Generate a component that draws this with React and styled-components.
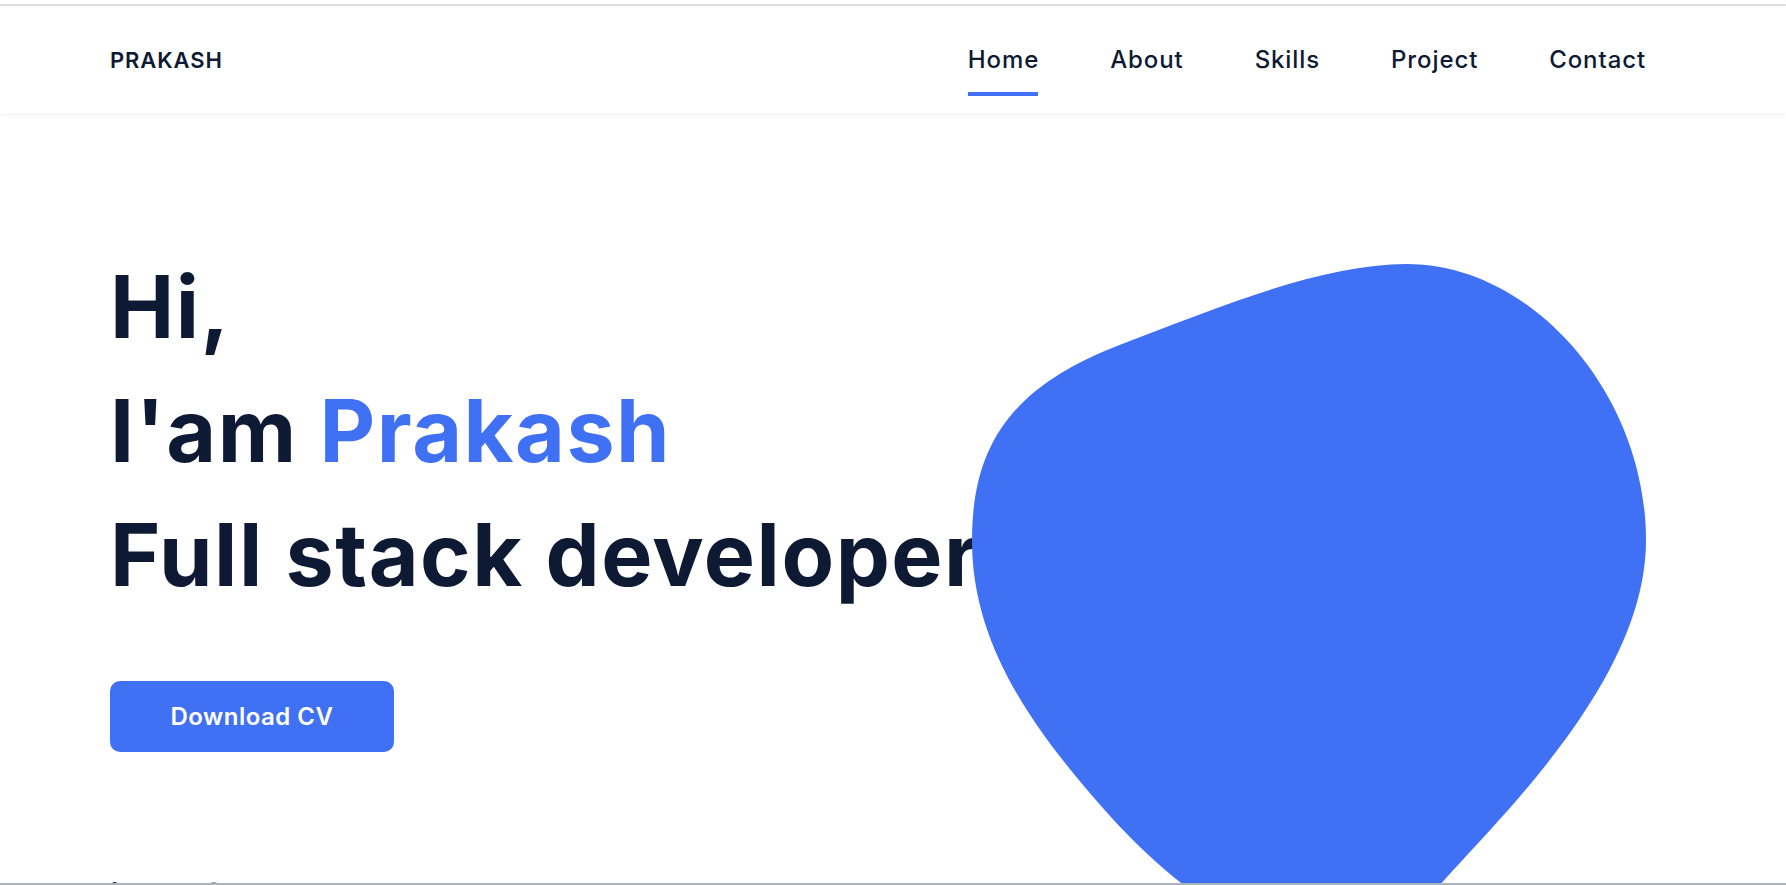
import React from "react";
import styled, { createGlobalStyle } from "styled-components";
import { FaLinkedinIn, FaGithub } from "react-icons/fa";

const GlobalStyle = createGlobalStyle`
  html, body {
    margin: 0;
    padding: 0;
    background: #ffffff;
    overflow: hidden;
  }
  * {
    box-sizing: border-box;
  }
`;

const links = ["Home", "About", "Skills", "Project", "Contact"];

const App = () => {
  return (
    <Page>
      <GlobalStyle />
      <TopRule />
      <Header>
        <Logo>PRAKASH</Logo>
        <NavMenu>
          {links.map((l) => (
            <NavLink key={l} href="#" $active={l === "Home"}>
              {l}
            </NavLink>
          ))}
        </NavMenu>
      </Header>
      <Hero>
        <Intro>
          <Title>
            Hi,
            <br />
            I'am <Accent>Prakash</Accent>
          </Title>
          <Subtitle>Full stack developer</Subtitle>
          <DownloadBtn href="#">Download CV</DownloadBtn>
          <Socials>
            <SocialLink href="#">
              <FaLinkedinIn />
            </SocialLink>
            <SocialLink href="#">
              <FaGithub />
            </SocialLink>
          </Socials>
        </Intro>
        <BlobBox>
          <svg width="674" height="700" viewBox="0 0 674 700">
            <path
              fill="#4070f4"
              d="M 0 277 C 0 180, 40 122, 150 80 C 250 42, 350 0, 435 0 C 560 0, 674 130, 674 276 C 674 420, 520 560, 460 630 C 420 662, 380 672, 330 672 C 270 672, 200 620, 138 552 C 60 465, 0 380, 0 277 Z"
            />
          </svg>
        </BlobBox>
      </Hero>
      <BottomEdge />
    </Page>
  );
};

const Page = styled.div`
  height: 100vh;
  overflow: hidden;
  font-family: Inter, "Liberation Sans", sans-serif;
  color: #0e1a34;
`;

const TopRule = styled.div`
  margin-top: 4px;
  height: 2px;
  background: #e0e0e0;
`;

const Header = styled.header`
  height: 107px;
  display: flex;
  align-items: center;
  justify-content: space-between;
  padding: 0 140px 0 110px;
  background: #ffffff;
  box-shadow: 0 2px 5px rgba(14, 26, 52, 0.05);
  position: relative;
  z-index: 2;
`;

const Logo = styled.div`
  font-size: 22px;
  font-weight: 600;
  letter-spacing: 0.9px;
  color: #0e1a34;
`;

const NavMenu = styled.nav`
  display: flex;
  align-items: center;
  gap: 71px;
`;

const NavLink = styled.a`
  position: relative;
  font-size: 24px;
  font-weight: 500;
  letter-spacing: 0.9px;
  color: #0e1a34;
  text-decoration: none;

  &::after {
    content: "";
    display: ${(p) => (p.$active ? "block" : "none")};
    position: absolute;
    left: 0;
    right: 1px;
    top: calc(100% + 18px);
    height: 4px;
    background: #4070f4;
  }
`;

const Hero = styled.section`
  display: grid;
  grid-template-columns: minmax(0, 1fr) 674px;
  padding: 0 140px 0 110px;
`;

const Intro = styled.div`
  padding-top: 132px;
  white-space: nowrap;
`;

const Title = styled.h1`
  margin: 0;
  font-size: 86px;
  font-weight: 700;
  line-height: 124px;
  letter-spacing: 1.5px;
  color: #0e1a34;
`;

const Subtitle = styled.h2`
  margin: 0;
  font-size: 86px;
  font-weight: 700;
  line-height: 124px;
  letter-spacing: 1.5px;
  color: #0e1a34;
`;

const Accent = styled.span`
  color: #4070f4;
`;

const DownloadBtn = styled.a`
  margin-top: 64px;
  width: 284px;
  height: 71px;
  display: flex;
  align-items: center;
  justify-content: center;
  background: #4070f4;
  border-radius: 10px;
  color: #ffffff;
  font-size: 24px;
  font-weight: 600;
  letter-spacing: 0.5px;
  text-decoration: none;
`;

const Socials = styled.div`
  margin-top: 130px;
  display: flex;
  gap: 62px;
`;

const SocialLink = styled.a`
  color: #0e1a34;
  font-size: 28px;
  display: flex;
`;

const BlobBox = styled.div`
  position: relative;
  margin-top: 151px;
  svg {
    display: block;
  }
`;

const BottomEdge = styled.div`
  position: fixed;
  left: 0;
  right: 0;
  bottom: 0;
  height: 2px;
  background: #aab2bb;
  z-index: 5;
`;

export default App;
